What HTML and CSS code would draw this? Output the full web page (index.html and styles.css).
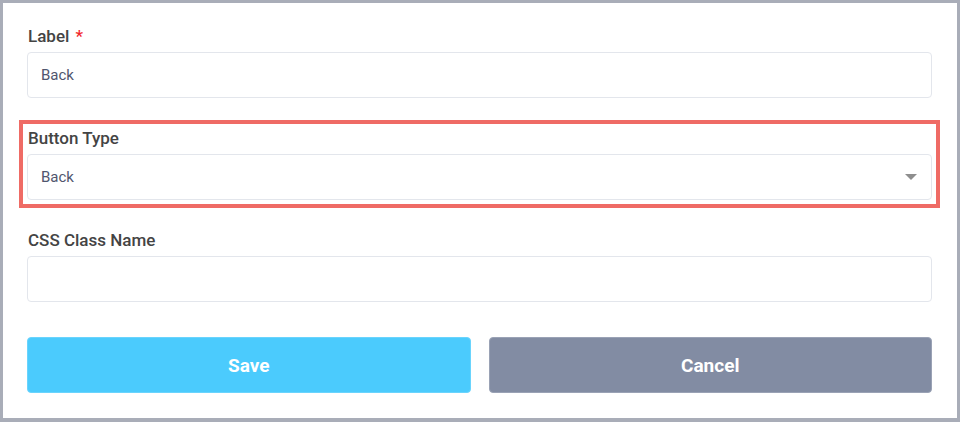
FILE: index.html
```html
<!DOCTYPE html>
<html lang="en">
<head>
    <meta charset="UTF-8">
    <meta name="viewport" content="width=device-width, initial-scale=1.0">
    <title>Edit Button</title>
    <link rel="stylesheet" href="styles.css">
</head>
<body>

<div class="frame">
    <form class="button-form">
        <div class="field">
            <label for="label">Label <span class="req">*</span></label>
            <input type="text" id="label" name="label" value="Back">
        </div>

        <div class="field highlight">
            <label for="button_type">Button Type</label>
            <div class="select" id="button_type">
                <span>Back</span>
                <svg width="12" height="6" viewBox="0 0 12 6"><path d="M0 0h12L6 6z" fill="#8e8e8e"/></svg>
            </div>
        </div>

        <div class="field">
            <label for="css_class">CSS Class Name</label>
            <input type="text" id="css_class" name="css_class">
        </div>

        <div class="actions">
            <button type="submit" class="btn save">Save</button>
            <button type="button" class="btn cancel">Cancel</button>
        </div>
    </form>
</div>

</body>
</html>
```

FILE: styles.css
```css
* { box-sizing: border-box; }
html, body { margin: 0; height: 422px; }
body { font-family: Roboto, "Liberation Sans", sans-serif; background: #fff; }
.frame { height: 422px; border: 3px solid #a9adb8; border-bottom-width: 4px; padding: 23px 25px 0 24px; }
.field { margin-bottom: 30px; }
.field label { display: block; font-size: 17px; font-weight: 500; line-height: 20px; color: #444; margin-bottom: 6px; padding-left: 1px; }
.req { color: #f2262b; margin-left: 2px; }
.field input, .select { display: flex; align-items: center; width: 100%; height: 46px; padding: 0 13px; border: 1px solid #e3e6ec; border-radius: 4px; font-family: inherit; font-size: 15px; color: #50566e; background: #fff; outline: none; }
.select { justify-content: space-between; padding-right: 14px; }
.highlight { outline: 4px solid #ef6b65; outline-offset: 4px; }
.actions { display: grid; grid-template-columns: 1fr 1fr; gap: 18px; margin-top: 35px; }
.btn { height: 56px; border: 1px solid transparent; border-radius: 4px; font-family: inherit; font-size: 19px; font-weight: 700; color: #fff; cursor: pointer; }
.save { background: #4bcbfd; border-color: #6ad4fd; }
.cancel { background: #828ca3; border-color: #9aa2b5; }
```
